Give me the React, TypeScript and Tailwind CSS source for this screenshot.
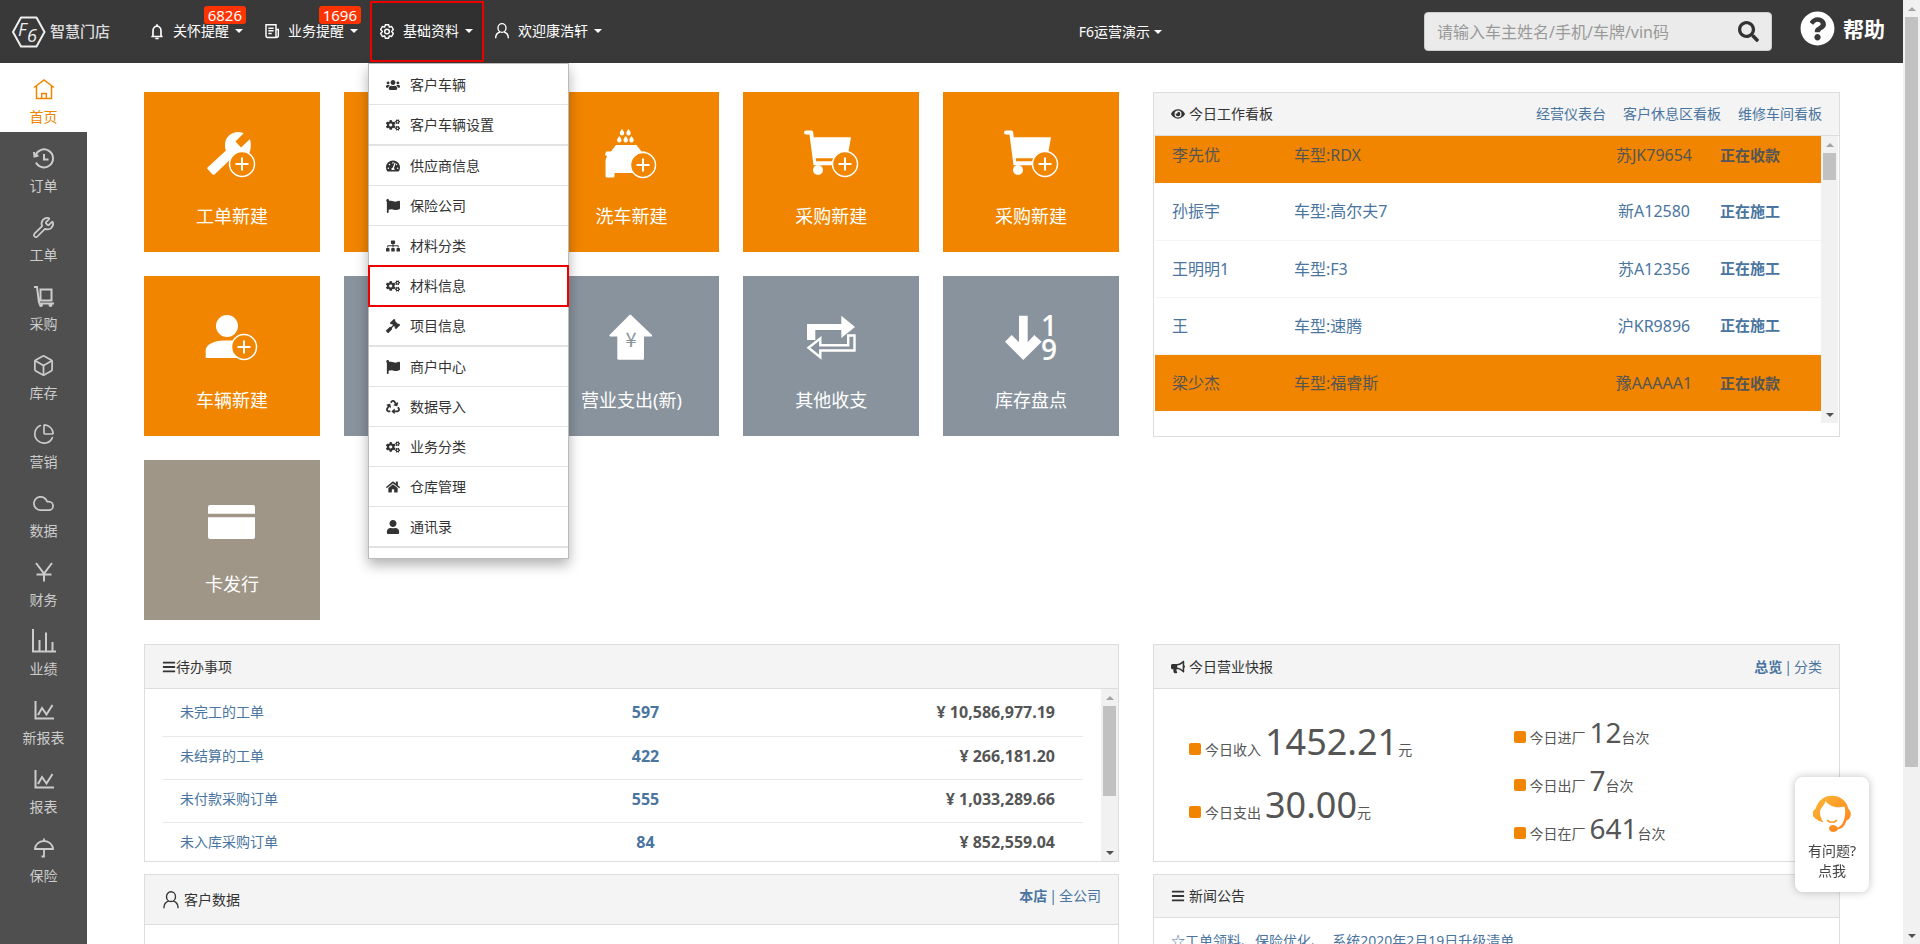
import React, { Component, ReactNode } from "react";
import { Box, Cloud, PieChart, Wrench } from "lucide-react";
import {
    FaBars, FaBullhorn, FaCogs, FaEye, FaFlag, FaGavel, FaHome, FaQuestionCircle,
    FaRecycle, FaSearch, FaSitemap, FaTachometerAlt, FaUser, FaUsers,
} from "react-icons/fa";

const ORANGE = "#f18500";

// ---------- icons ----------

function LineIcon({ children, size = 24, width = 2 }: { children: ReactNode; size?: number; width?: number }) {
    return (
        <svg width={size} height={size} viewBox="0 0 24 24" fill="none" stroke="currentColor" strokeWidth={width} aria-hidden="true">
            {children}
        </svg>
    );
}

function PersonIcon({ size = 16, width = 2 }: { size?: number; width?: number }) {
    return (
        <LineIcon size={size} width={width}>
            <ellipse cx="12" cy="7.5" rx="6" ry="6.5" />
            <path d="M2.5 23c0-5 2.500-8.500 6.500-9.500M21.500 23c0-5-2.500-8.500-6.500-9.500" />
        </LineIcon>
    );
}

function ChartIcon() {
    return (
        <LineIcon>
            <path d="M3.500 3v17.500H22M6 17l4-7 4.500 6.500L20.500 7" />
        </LineIcon>
    );
}

function Plus({ x, y }: { x: number; y: number }) {
    return (
        <g>
            <circle cx={x} cy={y} r="12.500" fill={ORANGE} stroke="#fff" strokeWidth="1.500" />
            <path d={`M${x - 6.5} ${y}h13M${x} ${y - 6.5}v13`} stroke="#fff" strokeWidth="2" />
        </g>
    );
}

function TileIcon({ children }: { children: ReactNode }) {
    return (
        <svg width="56" height="56" viewBox="0 0 56 56" fill="#fff" className="overflow-visible" aria-hidden="true">
            {children}
        </svg>
    );
}

const wrenchTile = (
    <TileIcon>
        <path d="M39.700 7.300C31 3 20.500 9.500 21 19.500c0 2.500.5 4 1 5L3.500 41.500q-.8.800 0 1.600l5 5.300q1 .9 2 0L30 30h14c3-5 3.500-11 2-17l-9 8.500-5.500-6z" />
        <Plus x={38} y={38} />
    </TileIcon>
);

const personTile = (
    <TileIcon>
        <circle cx="23" cy="16" r="11" />
        <path d="M1.700 48V40c0-5 8-9.500 18-9.500h16V48z" />
        <Plus x={40} y={37} />
    </TileIcon>
);

const washTile = (
    <TileIcon>
        {[[19, 3], [25.5, 3], [16.3, 10], [22.7, 10], [28.500, 10]].map(([x, y]) => (
            <path key={`${x}-${y}`} d={`M${x} ${y}c1.300 1.600 2.200 2.800 2.200 4.200a2.200 2.200 0 0 1-4.400 0c0-1.400.9-2.600 2.200-4.200z`} />
        ))}
        <path d="M13 19h20.500l5 6.500h4l1 3-2 4V47H11.500v3q0 1.500-1.500 1.500H4q-1.500 0-1.500-1.500V34l1.500-4-2-1 1-3.500h5z" />
        <Plus x={40} y={39} />
    </TileIcon>
);

const cartTile = (
    <TileIcon>
        <path d="M3 4.500h5.500q1.500 0 1.700 1.700l.5 5H48l-3 17v4H12.800l.2 3h20v4H10.500L6.500 8.500H3a2 2 0 0 1 0-4z" />
        <circle cx="15" cy="44" r="5" />
        <Plus x={42} y={38} />
    </TileIcon>
);

const payTile = (
    <TileIcon>
        <path d="M28 5l21 20q.5 1-.5 1.500H41v22q0 1.200-1.200 1.200H15.500q-1.200 0-1.200-1.200v-22H7q-1-.5-.5-1.500L26.500 5q.8-.8 1.500 0z" />
        <text x="28" y="37" textAnchor="middle" fontSize="20" fill="#89939d" fontFamily="Noto Sans CJK SC, sans-serif">¥</text>
    </TileIcon>
);

const swapTile = (
    <TileIcon>
        <path d="M4 30V14h34.300V5.700L52 17 38.300 28v-8h-26v10z" />
        <path d="M5.500 37.700L17.300 28.500v6.700h27.900V25.500h6.300v15H17.300v6.700z" fill="none" stroke="#fff" strokeWidth="2.400" />
    </TileIcon>
);

const countTile = (
    <TileIcon>
        <path d="M16 5.700h8.700v26.600l6.600-7.300 7.400 6.700L20.300 50 2 31.700 8.700 25l7.300 7.300z" />
        <text x="46" y="26" textAnchor="middle" fontSize="28" fontWeight="600" fontFamily="Open Sans, sans-serif">1</text>
        <text x="46" y="50" textAnchor="middle" fontSize="28" fontWeight="600" fontFamily="Open Sans, sans-serif">9</text>
    </TileIcon>
);

const cardTile = (
    <TileIcon>
        <path d="M6 11h43q2 0 2 2v6.700H4V13q0-2 2-2zM4 23.300h47V43q0 2-2 2H6q-2 0-2-2z" />
    </TileIcon>
);

// ---------- data ----------

const sideItems = [
    {
        label: "首页",
        icon: <LineIcon width={1.5}><path d="M2 10.500L12 3l10 7.500M4.500 9v12.500h15V9M9.700 21.500v-5h4.600v5" /></LineIcon>,
    },
    {
        label: "订单",
        icon: <LineIcon><path d="M3.500 9.500A9 9 0 1 1 4 16.500M12 8v5.500h4.500" /><path d="M2 6l.5 4.500 4-1" /></LineIcon>,
    },
    { label: "工单", icon: <Wrench size={23} strokeWidth={1.8} /> },
    {
        label: "采购",
        icon: <LineIcon><path d="M2 3h3l2 16M8.500 5.500h11v11h-11zM6.500 19.500H22" /><circle cx="9" cy="21" r="1" /><circle cx="18.500" cy="21" r="1" /></LineIcon>,
    },
    { label: "库存", icon: <Box size={23} strokeWidth={1.8} /> },
    { label: "营销", icon: <PieChart size={22} strokeWidth={1.8} /> },
    { label: "数据", icon: <Cloud size={23} strokeWidth={1.8} /> },
    { label: "财务", icon: <LineIcon><path d="M4 3l8 10.500L20 3M12 13v8.500M4.500 14.500h15" /></LineIcon> },
    { label: "业绩", icon: <LineIcon><path d="M1 0v22.500h23M7.500 22V11M14 22V3.500M20.500 22v-9" /></LineIcon> },
    { label: "新报表", icon: <ChartIcon /> },
    { label: "报表", icon: <ChartIcon /> },
    {
        label: "保险",
        icon: <LineIcon width={1.8}><path d="M3 13a9 8 0 0 1 18 0zM12 5V2.500M12 13v7.500h-2.500" /></LineIcon>,
    },
];

const tiles = [
    { label: "工单新建", color: "bg-[#f18500]", icon: wrenchTile },
    { label: "", color: "bg-[#f18500]", icon: null },
    { label: "洗车新建", color: "bg-[#f18500]", icon: washTile },
    { label: "采购新建", color: "bg-[#f18500]", icon: cartTile },
    { label: "采购新建", color: "bg-[#f18500]", icon: cartTile },
    { label: "车辆新建", color: "bg-[#f18500]", icon: personTile },
    { label: "", color: "bg-[#89939d]", icon: null },
    { label: "营业支出(新)", color: "bg-[#89939d]", icon: payTile },
    { label: "其他收支", color: "bg-[#89939d]", icon: swapTile },
    { label: "库存盘点", color: "bg-[#89939d]", icon: countTile },
    { label: "卡发行", color: "bg-[#9f9687]", icon: cardTile },
];

const menuItems = [
    { label: "客户车辆", icon: <FaUsers /> },
    { label: "客户车辆设置", icon: <FaCogs />, divider: true },
    { label: "供应商信息", icon: <FaTachometerAlt /> },
    { label: "保险公司", icon: <FaFlag /> },
    { label: "材料分类", icon: <FaSitemap /> },
    { label: "材料信息", icon: <FaCogs />, active: true },
    { label: "项目信息", icon: <FaGavel />, divider: true },
    { label: "商户中心", icon: <FaFlag /> },
    { label: "数据导入", icon: <FaRecycle /> },
    { label: "业务分类", icon: <FaCogs /> },
    { label: "仓库管理", icon: <FaHome /> },
    { label: "通讯录", icon: <FaUser />, divider: true },
];

const jobs = [
    { name: "李先优", car: "RDX", plate: "苏JK79654", status: "正在收款" },
    { name: "孙振宇", car: "高尔夫7", plate: "新A12580", status: "正在施工" },
    { name: "王明明1", car: "F3", plate: "苏A12356", status: "正在施工" },
    { name: "王", car: "速腾", plate: "沪KR9896", status: "正在施工" },
    { name: "梁少杰", car: "福睿斯", plate: "豫AAAAA1", status: "正在收款" },
];

const todos = [
    { label: "未完工的工单", count: "597", amount: "10,586,977.19" },
    { label: "未结算的工单", count: "422", amount: "266,181.20" },
    { label: "未付款采购订单", count: "555", amount: "1,033,289.66" },
    { label: "未入库采购订单", count: "84", amount: "852,559.04" },
];

// ---------- parts ----------

function Caret() {
    return <span className="border-x-4 border-t-4 border-x-transparent border-t-current" />;
}

function Scrollbar({ thumb }: { thumb: string }) {
    return (
        <div className="flex w-[17px] shrink-0 flex-col items-center bg-[#f1f1f1]" aria-hidden="true">
            <span className="mt-[7px] mb-[6px] border-x-4 border-b-4 border-x-transparent border-b-[#a3a3a3]" />
            <span className={`w-[13px] bg-[#c1c1c1] ${thumb}`} />
            <span className="mt-auto mb-[6px] border-x-4 border-t-4 border-x-transparent border-t-[#505050]" />
        </div>
    );
}

function NavItem({ icon, label, badge, open, children }: { icon: ReactNode; label: string; badge?: string; open?: boolean; children?: ReactNode }) {
    return (
        <li className="relative">
            <button
                className={`flex h-[61px] items-center border-2 pr-[9px] pb-px pl-[7px] ${open ? "border-[#ee0000] bg-[#303030]" : "border-transparent"}`}
                aria-expanded={open}
            >
                <span className="mr-2 flex w-4 justify-center">{icon}</span>
                <span className="mr-[6px]">{label}</span>
                <Caret />
            </button>
            {badge && (
                <span className="absolute top-[5px] right-2 h-[18px] rounded-[3px] bg-[#ff3300] px-1 text-[15px] leading-[18px]">{badge}</span>
            )}
            {children}
        </li>
    );
}

function DropMenu() {
    return (
        <ul className="absolute top-[62px] left-[-2px] z-10 w-[201px] border border-[#bbb] bg-white pt-px pb-[10px] text-[#333] shadow-[0_6px_12px_rgba(0,0,0,0.3)]">
            {menuItems.map((item) => (
                <li key={item.label} className={item.divider ? "border-b border-[#e3e3e3]" : ""}>
                    <a
                        href="#"
                        className={`flex h-10 items-center border-b border-[#e3e3e3] pl-4 ${item.active ? "outline-2 -outline-offset-1 outline-[#ee0000]" : ""}`}
                    >
                        <span className="mr-[9px] flex w-4 justify-center">{item.icon}</span>
                        {item.label}
                    </a>
                </li>
            ))}
        </ul>
    );
}

function Header() {
    return (
        <header className="flex h-[63px] shrink-0 items-center bg-[#393939] pr-[18px] pl-3 text-sm text-white">
            <a href="#" className="flex w-[128px] shrink-0 items-center gap-1 text-[15px] font-medium text-[#ddd]">
                <svg width="34" height="32" viewBox="0 0 34 32" fill="none" aria-hidden="true">
                    <path d="M9 1.500h15.500L32.500 16l-8 14.500H9L1 16z" stroke="#eee" strokeWidth="2" strokeLinejoin="round" />
                    <text x="6" y="20" fontSize="18" fontStyle="italic" fontWeight="400" fill="#eee" fontFamily="Open Sans, sans-serif">F</text>
                    <text x="15" y="26" fontSize="18" fontStyle="italic" fontWeight="400" fill="#eee" fontFamily="Open Sans, sans-serif">6</text>
                </svg>
                智慧门店
            </a>
            <ul className="flex items-center gap-px">
                <NavItem
                    label="关怀提醒"
                    badge="6826"
                    icon={<LineIcon size={17} width={2.5}><path d="M3.500 19.500h17M6 19v-8a6 7 0 0 1 12 0v8M12 4V1M9.500 22.500h5" /></LineIcon>}
                />
                <NavItem
                    label="业务提醒"
                    badge="1696"
                    icon={<LineIcon size={17} width={2.2}><path d="M3 2h15v19H5.500Q3 21 3 18.500zM18 9h3.500v9.500Q21.500 21 18 21M6.500 7h8M6.500 11h8M6.500 15h5" /></LineIcon>}
                />
                <NavItem
                    label="基础资料"
                    open
                    icon={
                        <LineIcon size={17} width={2.2}>
                            <path d="M9.500 2h5l1 3.500 3.500-1 2.500 4.500-2.500 3 2.500 3-2.500 4.500-3.500-1-1 3.500h-5l-1-3.500-3.500 1L2.500 15 5 12 2.500 9 5 4.500l3.500 1z" strokeLinejoin="round" />
                            <circle cx="12" cy="12" r="3.500" />
                        </LineIcon>
                    }
                >
                    <DropMenu />
                </NavItem>
                <NavItem label="欢迎康浩轩" icon={<PersonIcon />} />
            </ul>
            <button className="mr-[262px] ml-auto flex shrink-0 items-center gap-1">
                F6运营演示 <Caret />
            </button>
            <form className="flex h-[39px] w-[348px] items-center rounded border border-[#ccc] bg-[#ebebeb] px-3 text-[#333]">
                <input
                    type="text"
                    aria-label="搜索"
                    placeholder="请输入车主姓名/手机/车牌/vin码"
                    className="min-w-0 flex-1 text-base outline-none placeholder:text-[#999]"
                />
                <button type="button" aria-label="搜索"><FaSearch size={21} /></button>
            </form>
            <a href="#" className="ml-7 flex items-center gap-2 pb-[6px] text-[21px] font-bold">
                <FaQuestionCircle size={35} /> 帮助
            </a>
        </header>
    );
}

function Sidebar() {
    return (
        <nav className="w-[87px] shrink-0 bg-[#4f4f4f]">
            {sideItems.map((item, i) => (
                <a
                    key={item.label}
                    href="#"
                    className={`flex h-[69px] flex-col items-center gap-[6px] pt-[14px] text-sm ${i === 0 ? "bg-white text-[#f18500]" : "text-[#ccc]"}`}
                >
                    <span className="flex h-6 items-center">{item.icon}</span>
                    {item.label}
                </a>
            ))}
        </nav>
    );
}

function Panel({ title, right, tall, className, children }: { title: ReactNode; right?: ReactNode; tall?: string; className?: string; children?: ReactNode }) {
    return (
        <section className={`flex flex-col border border-[#ddd] bg-white ${className ?? ""}`}>
            <div className={`flex shrink-0 items-center justify-between border-b border-[#ddd] bg-[#f4f4f4] px-[17px] ${tall ?? "h-11"}`}>
                <h2 className="flex items-center gap-1 text-[#333]">{title}</h2>
                {right && <div className="flex items-center text-[#4a75a0]">{right}</div>}
            </div>
            {children}
        </section>
    );
}

function WorkBoard() {
    return (
        <Panel
            className="self-start pb-[13px]"
            tall="h-[43px]"
            title={<><FaEye size={14} />今日工作看板</>}
            right={
                <div className="flex gap-[17px]">
                    <a href="#">经营仪表台</a>
                    <a href="#">客户休息区看板</a>
                    <a href="#">维修车间看板</a>
                </div>
            }
        >
            <div className="flex px-px">
                <div className="h-[287px] flex-1">
                    <table className="w-full table-fixed text-base">
                        <tbody>
                            {jobs.map((job, i) => (
                                <tr
                                    key={job.name}
                                    className={`${i === 0 ? "h-[47px] align-top leading-[38px]" : "h-[57px]"} ${job.status === "正在收款" ? "bg-[#f18500] text-[#555]" : "border-b border-[#f4f4f4] text-[#4a75a0]"}`}
                                >
                                    <td className="w-[139px] pl-[17px]">{job.name}</td>
                                    <td>车型:{job.car}</td>
                                    <td className="w-[100px] text-center">{job.plate}</td>
                                    <td className="w-[117px] pl-4 text-[15px] font-bold">{job.status}</td>
                                </tr>
                            ))}
                        </tbody>
                    </table>
                </div>
                <Scrollbar thumb="h-[27px]" />
            </div>
        </Panel>
    );
}

function TodoPanel() {
    return (
        <Panel className="h-[218px]" title={<span className="flex items-center"><FaBars size={14} />待办事项</span>}>
            <div className="flex min-h-0 flex-1">
                <div className="flex-1 overflow-hidden pt-1 pr-[18px] pl-[17px]">
                    <table className="w-full table-fixed">
                        <tbody>
                            {todos.map((todo) => (
                                <tr key={todo.label} className="h-[43px] border-b border-[#e9e9e9] text-[#4a75a0]">
                                    <td className="pb-1 pl-[18px]"><a href="#">{todo.label}</a></td>
                                    <td className="pb-1 pl-[46px] text-center text-base font-bold">{todo.count}</td>
                                    <td className="pr-7 pb-1 text-right text-base font-bold text-[#555]">¥ {todo.amount}</td>
                                </tr>
                            ))}
                        </tbody>
                    </table>
                </div>
                <Scrollbar thumb="h-[90px]" />
            </div>
        </Panel>
    );
}

function Stat({ label, value, unit, size }: { label: string; value: string; unit: string; size: string }) {
    return (
        <p className="flex items-baseline text-[#555]">
            <span className="mr-1 h-3 w-3 rounded-[2px] bg-[#f18500]" />
            {label}
            <span className={`ml-1 ${size}`}>{value}</span>
            {unit}
        </p>
    );
}

function ReportPanel() {
    return (
        <Panel
            className="h-[218px]"
            title={<><FaBullhorn size={14} />今日营业快报</>}
            right={<><a href="#" className="font-bold">总览</a><span className="px-[2px]">|</span><a href="#">分类</a></>}
        >
            <div className="grid flex-1 grid-cols-[325fr_326fr] pl-[35px]">
                <div className="pt-[21px]">
                    <Stat label="今日收入" value="1452.21" unit="元" size="text-[36px] leading-[63px]" />
                    <Stat label="今日支出" value="30.00" unit="元" size="text-[36px] leading-[63px]" />
                </div>
                <div className="pt-[19px]">
                    <Stat label="今日进厂" value="12" unit="台次" size="text-[28px] leading-[48px]" />
                    <Stat label="今日出厂" value="7" unit="台次" size="text-[28px] leading-[48px]" />
                    <Stat label="今日在厂" value="641" unit="台次" size="text-[28px] leading-[48px]" />
                </div>
            </div>
        </Panel>
    );
}

function HelpCard() {
    return (
        <button className="fixed right-[51px] bottom-[52px] flex h-[115px] w-[74px] flex-col items-center rounded-lg bg-white pt-[18px] text-sm text-[#444] shadow-[0_0_8px_rgba(0,0,0,0.25)]">
            <svg width="38" height="38" viewBox="0 0 38 38" fill="none" aria-hidden="true">
                <defs>
                    <linearGradient id="hair" x1="0" y1="0" x2="1" y2="1">
                        <stop offset="0" stopColor="#fdb833" />
                        <stop offset="1" stopColor="#ff7f1f" />
                    </linearGradient>
                </defs>
                <path
                    d="M2.500 14C5 5.500 11 .8 19 .8S33.500 5.500 35.500 14c3 2 3 8 0 10.500l-2 1C32 30.500 29 34 25 34.200c-1.500 3.800-9 3.800-9-.7 0-4.500 7-4.500 8.500-1 3-.5 5.500-4 6.500-8 1.500-5 1.500-9 .5-13-5 1.500-14 1.500-19-5.500-.5 4-5 6.500-5.500 10.500-.3 4 1.500 8 3.500 10.500-2.500 0-5-1-6.500-2.500-5.500-2-5.500-9-1.500-10.500z"
                    fill="url(#hair)"
                />
                <path d="M14.500 25.500q4.500 3.500 9 0" stroke="#fda030" strokeWidth="1.600" strokeLinecap="round" />
            </svg>
            <span className="mt-2 leading-5">有问题?<br />点我</span>
        </button>
    );
}

export default class App extends Component {
    render() {
        return (
            <div className="flex h-screen overflow-hidden bg-white font-['Noto_Sans','Noto_Sans_CJK_SC',sans-serif] text-sm">
                <div className="flex min-w-0 flex-1 flex-col">
                    <Header />
                    <div className="flex min-h-0 flex-1">
                        <Sidebar />
                        <main className="min-w-0 flex-1 overflow-hidden pt-[29px] pr-[63px] pl-[57px]">
                            <div className="grid grid-cols-[975fr_687fr] gap-x-[34px]">
                                <div className="mb-6 grid grid-cols-5 gap-6">
                                    {tiles.map((tile, i) => (
                                        <a key={i} href="#" className={`flex h-40 flex-col items-center pt-[34px] text-lg leading-7 text-white ${tile.color}`}>
                                            {tile.icon}
                                            <span className="mt-5">{tile.label}</span>
                                        </a>
                                    ))}
                                </div>
                                <WorkBoard />
                            </div>
                            <div className="grid grid-cols-[975fr_687fr] gap-x-[34px] gap-y-3">
                                <TodoPanel />
                                <ReportPanel />
                                <Panel
                                    className="h-[200px]"
                                    tall="h-[50px]"
                                    title={<span className="flex items-center gap-1"><PersonIcon size={18} width={1.8} />客户数据</span>}
                                    right={<div className="pb-2"><a href="#" className="font-bold">本店</a><span className="px-[2px]">|</span><a href="#">全公司</a></div>}
                                />
                                <Panel className="h-[200px]" tall="h-[43px]" title={<><FaBars size={14} />新闻公告</>}>
                                    <a href="#" className="px-[17px] pt-[13px] whitespace-pre text-[#4a75a0]">☆工单领料、保险优化、  系统2020年2月19日升级清单</a>
                                </Panel>
                            </div>
                        </main>
                    </div>
                </div>
                <Scrollbar thumb="h-[750px]" />
                <HelpCard />
            </div>
        );
    }
}
